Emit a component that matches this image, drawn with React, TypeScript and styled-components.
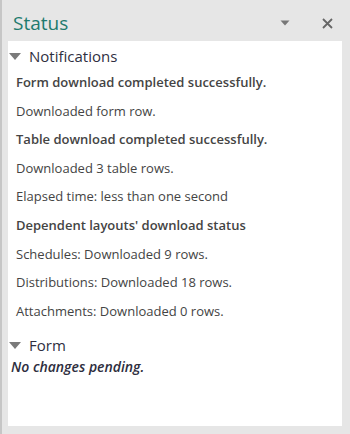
import React from "react";
import styled, { createGlobalStyle } from "styled-components";

const Global = createGlobalStyle`
  html, body { margin: 0; padding: 0; }
  body {
    background: #e6e6e6;
    font-family: "Open Sans", "Noto Sans", sans-serif;
  }
`;

const Pane = styled.div`
  width: 350px;
  height: 434px;
  box-sizing: border-box;
  border-left: 2px solid #c6c6c6;
  background: #e6e6e6;
  display: flex;
  flex-direction: column;
`;

const Header = styled.div`
  height: 41px;
  box-sizing: border-box;
  padding: 11px 0 0 11px;
  display: flex;
  align-items: flex-start;
`;

const Title = styled.div`
  flex: 1;
  font-size: 19px;
  line-height: 24px;
  color: #217a6e;
`;

const HeaderButton = styled.div<{ $left: number; $top: number }>`
  width: 12px;
  height: 12px;
  display: flex;
  align-items: center;
  justify-content: center;
  margin-left: ${(p) => p.$left}px;
  margin-top: ${(p) => p.$top}px;
`;

const HeaderEnd = styled.div`
  width: 17px;
`;

const Body = styled.div`
  margin: 0 8px 8px 6px;
  height: 385px;
  background: #ffffff;
  box-sizing: border-box;
  padding-top: 5px;
  display: flex;
  flex-direction: column;
`;

const SectionHead = styled.div<{ $gap?: number }>`
  display: flex;
  align-items: center;
  height: 20px;
  margin-top: ${(p) => p.$gap ?? 0}px;
  font-size: 15px;
  line-height: 20px;
  color: #2f2f3f;
`;

const Caret = styled.span`
  width: 0;
  height: 0;
  border-left: 6px solid transparent;
  border-right: 6px solid transparent;
  border-top: 7px solid #7a7a7a;
  margin: 0 8px 0 1px;
`;

const Rows = styled.div`
  display: flex;
  flex-direction: column;
  padding-left: 8px;
  margin-top: 2px;
`;

const Row = styled.div<{ $bold?: boolean }>`
  font-size: 13px;
  line-height: 28.6px;
  color: #444444;
  font-weight: ${(p) => (p.$bold ? 600 : 400)};
  white-space: nowrap;
`;

const Pending = styled.div`
  margin-top: 2px;
  padding-left: 3px;
  font-size: 14px;
  line-height: 19px;
  font-style: italic;
  font-weight: 600;
  color: #2e2e3e;
`;

const rows: { text: string; bold?: boolean }[] = [
  { text: "Form download completed successfully.", bold: true },
  { text: "Downloaded form row." },
  { text: "Table download completed successfully.", bold: true },
  { text: "Downloaded 3 table rows." },
  { text: "Elapsed time: less than one second" },
  { text: "Dependent layouts' download status", bold: true },
  { text: "Schedules: Downloaded 9 rows." },
  { text: "Distributions: Downloaded 18 rows." },
  { text: "Attachments: Downloaded 0 rows." },
];

export default function App() {
  return (
    <>
      <Global />
      <Pane>
        <Header>
          <Title>Status</Title>
          <HeaderButton $left={0} $top={6}>
            <svg width="10" height="6" viewBox="0 0 10 6">
              <polygon points="0.5,0.5 9.5,0.5 5,5.5" fill="#777" />
            </svg>
          </HeaderButton>
          <HeaderButton $left={30} $top={6}>
            <svg width="11" height="11" viewBox="0 0 11 11">
              <path d="M1 1 L10 10 M10 1 L1 10" stroke="#666" strokeWidth="1.8" />
            </svg>
          </HeaderButton>
          <HeaderEnd />
        </Header>
        <Body>
          <SectionHead>
            <Caret />
            Notifications
          </SectionHead>
          <Rows>
            {rows.map((r, i) => (
              <Row key={i} $bold={r.bold}>
                {r.text}
              </Row>
            ))}
          </Rows>
          <SectionHead $gap={10}>
            <Caret />
            Form
          </SectionHead>
          <Pending>No changes pending.</Pending>
        </Body>
      </Pane>
    </>
  );
}
